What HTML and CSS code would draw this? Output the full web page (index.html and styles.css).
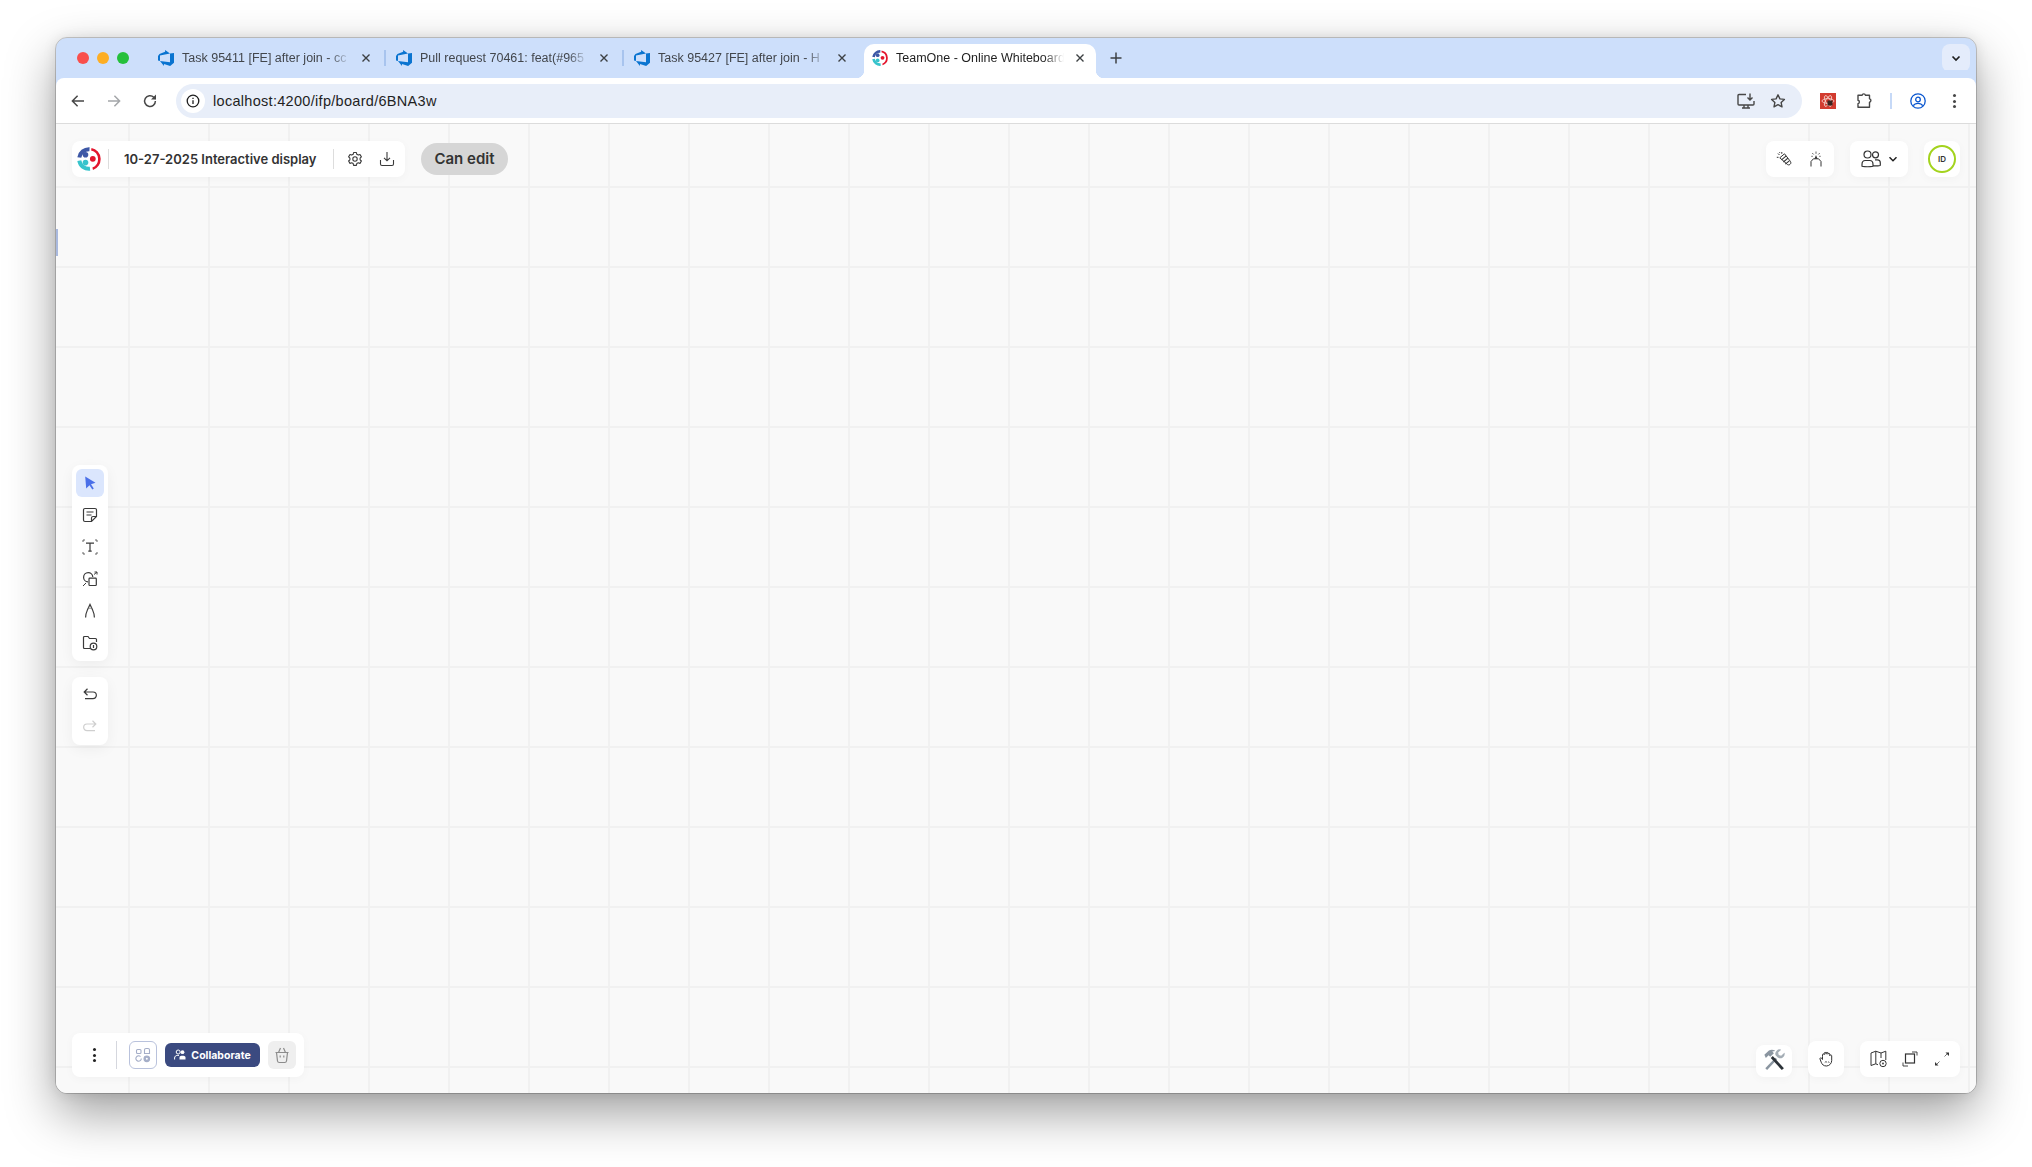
FILE: index.html
```html
<!DOCTYPE html>
<html lang="en">
<head>
<meta charset="utf-8">
<title>TeamOne - Online Whiteboard</title>
<link rel="stylesheet" href="styles.css">
</head>
<body>
<svg class="defs" width="0" height="0" aria-hidden="true">
  <symbol id="ado" viewBox="0 0 24 24"><path fill="#0a74d0" d="M0 8.877L2.247 5.91l8.405-3.416V.022l7.37 5.393L2.966 8.338v8.225L0 15.707zm24-4.45v14.651l-5.753 4.9-9.303-3.057v3.056l-5.978-7.416 15.057 1.798V5.415z"/></symbol>
  <symbol id="logo" viewBox="0 0 24 24">
    <path d="M2.300 10.500A9.800 9.800 0 0 1 12.500 2.200" fill="none" stroke="#3d58a6" stroke-width="4"/>
    <path d="M14.500 .9A11.500 11.500 0 0 1 16 23l-.6-2.400A9 9 0 0 0 14.100 3.500z" fill="#e3152d"/>
    <path d="M2.300 13.600A9.800 9.800 0 0 0 13 21.800" fill="none" stroke="#38c4cc" stroke-width="4"/>
    <circle cx="8.500" cy="7.800" r="2.800" fill="#3d58a6"/>
    <circle cx="8.500" cy="15.600" r="2.800" fill="#38c4cc"/>
    <circle cx="15.800" cy="11.800" r="2.900" fill="#e3152d"/>
  </symbol>
  <symbol id="x" viewBox="0 0 10 10"><path d="M1.500 1.500l7 7M8.500 1.500l-7 7" stroke="#3c4043" stroke-width="1.400" fill="none"/></symbol>
</svg>
<div class="window">
  <header class="tabstrip">
    <div class="lights"><i class="light red"></i><i class="light amber"></i><i class="light green"></i></div>
    <div class="tabs">
      <div class="tab sep"><svg class="favicon"><use href="#ado"/></svg><span class="tabtitle">Task 95411 [FE] after join - cc</span><svg class="close"><use href="#x"/></svg></div>
      <div class="tab sep"><svg class="favicon"><use href="#ado"/></svg><span class="tabtitle">Pull request 70461: feat(#965</span><svg class="close"><use href="#x"/></svg></div>
      <div class="tab"><svg class="favicon"><use href="#ado"/></svg><span class="tabtitle">Task 95427 [FE] after join - H</span><svg class="close"><use href="#x"/></svg></div>
      <div class="tab active"><svg class="favicon"><use href="#logo"/></svg><span class="tabtitle">TeamOne - Online Whiteboard</span><svg class="close"><use href="#x"/></svg></div>
      <div class="newtab">
        <svg width="14" height="14" viewBox="0 0 14 14"><path d="M7 1.500v11M1.500 7h11" stroke="#3c4043" stroke-width="1.500"/></svg>
      </div>
    </div>
    <div class="tabmenu"><svg width="12" height="12" viewBox="0 0 12 12"><path d="M2.500 4.500 6 8l3.500-3.500" fill="none" stroke="#1f1f1f" stroke-width="1.700"/></svg></div>
  </header>

  <nav class="toolbar">
    <div class="navbtns">
      <svg class="navicon" viewBox="0 0 16 16"><path d="M14 8H2.600M7.600 2.800 2.400 8l5.200 5.200" fill="none" stroke="#474747" stroke-width="1.500"/></svg>
      <svg class="navicon" viewBox="0 0 16 16"><path d="M2 8h11.400M8.400 2.800 13.600 8l-5.200 5.200" fill="none" stroke="#a4a6a9" stroke-width="1.500"/></svg>
      <svg class="navicon" viewBox="0 0 16 16"><path d="M13.400 8a5.400 5.400 0 1 1-1.600-3.800L13.600 6" fill="none" stroke="#474747" stroke-width="1.500"/><path d="M14 1.600v5h-5z" fill="#474747"/></svg>
    </div>
    <div class="omnibox">
      <span class="infochip"><svg width="14" height="14" viewBox="0 0 14 14"><circle cx="7" cy="7" r="5.800" fill="none" stroke="#1f1f1f" stroke-width="1.300"/><path d="M7 6.200v3.800M7 3.800v1.200" stroke="#1f1f1f" stroke-width="1.300"/></svg></span>
      <span class="url">localhost:4200/ifp/board/6BNA3w</span>
      <span class="omniright">
        <svg width="18" height="16" viewBox="0 0 18 16"><path d="M9 1.500H2A1 1 0 0 0 1 2.500V11a1 1 0 0 0 1 1h14a1 1 0 0 0 1-1V8M5 15h8M7 12.500v2M11 12.500v2" fill="none" stroke="#474747" stroke-width="1.400"/><path d="M13 .5v6M10.500 4.500 13 7l2.500-2.500" fill="none" stroke="#474747" stroke-width="1.400"/></svg>
        <svg width="16" height="16" viewBox="0 0 16 16"><path d="M8 1.800l1.900 4.100 4.500.5-3.300 3 .9 4.400L8 11.600l-4 2.200.9-4.400-3.300-3 4.500-.5z" fill="none" stroke="#474747" stroke-width="1.400" stroke-linejoin="round"/></svg>
      </span>
    </div>
    <div class="extras">
      <span class="ext-red"><svg width="16" height="16" viewBox="0 0 16 16"><g fill="none" stroke="#f6d5cf" stroke-width=".8"><ellipse cx="8" cy="8" rx="6" ry="2.400"/><ellipse cx="8" cy="8" rx="6" ry="2.400" transform="rotate(60 8 8)"/><ellipse cx="8" cy="8" rx="6" ry="2.400" transform="rotate(120 8 8)"/></g><path d="M7.500 7.500h5v5h-5z" fill="#3a2420"/></svg></span>
      <svg width="16" height="16" viewBox="0 0 16 16"><path d="M1 2.500h4a1.800 1.800 0 0 1 3.500 0H12.500v3.400a1.800 1.800 0 0 1 0 3.500v5H1v-3.400a1.800 1.800 0 0 0 0-3.500z" transform="translate(1 -.2)" fill="none" stroke="#474747" stroke-width="1.400" stroke-linejoin="round"/></svg>
      <i class="extsep"></i>
      <svg width="16" height="16" viewBox="0 0 16 16"><circle cx="8" cy="8" r="7.200" fill="none" stroke="#0b57d0" stroke-width="1.300"/><circle cx="8" cy="6.500" r="2.300" fill="none" stroke="#0b57d0" stroke-width="1.300"/><path d="M3.300 12.800c1-1.800 2.700-2.500 4.700-2.500s3.700.7 4.700 2.500" fill="none" stroke="#0b57d0" stroke-width="1.300"/></svg>
      <span class="kebab"><i></i><i></i><i></i></span>
    </div>
  </nav>

  <main class="board">
    <i class="edge-mark"></i>

    <div class="top-left">
      <div class="panel title-panel">
        <span class="logo-cell"><svg width="24" height="24"><use href="#logo"/></svg></span>
        <span class="board-title">10-27-2025 Interactive display</span>
        <span class="title-actions">
          <svg width="16" height="16" viewBox="0 0 16 16"><path d="M6.600 1.500h2.800l.4 1.800 1.500.8 1.700-.6 1.400 2.400-1.300 1.200v1.700l1.300 1.200-1.400 2.400-1.700-.6-1.500.8-.4 1.800H6.600l-.4-1.800-1.500-.8-1.700.6-1.400-2.400 1.300-1.200V7.100L1.600 5.900 3 3.500l1.700.6 1.500-.8z" fill="none" stroke="#3a3a3a" stroke-width="1.100" stroke-linejoin="round"/><circle cx="8" cy="8" r="2.200" fill="none" stroke="#3a3a3a" stroke-width="1.100"/></svg>
          <svg width="16" height="16" viewBox="0 0 16 16"><path d="M8 1v8.500M5 6.800 8 9.800l3-3M1.500 9v4a1.500 1.500 0 0 0 1.500 1.500h10a1.500 1.500 0 0 0 1.500-1.500V9" fill="none" stroke="#3a3a3a" stroke-width="1.100"/></svg>
        </span>
      </div>
      <div class="can-edit">Can edit</div>
    </div>

    <div class="top-right">
      <div class="panel icon-row">
        <span class="cell"><svg width="16" height="16" viewBox="0 0 16 16"><path d="M3.800 6.800 8.500 2.800l5.900 7.600c.7 1 .6 2.300-.4 3-1 .8-2.300.6-3-.3z" fill="#fff" stroke="#333" stroke-width="1"/><path d="M5.500 8.800l4.700-3.900M7.400 11l4.500-3.800M9.300 13.200l4-3.300" stroke="#333" stroke-width="1.100"/><path d="M3.500 4 2 2.500M2.500 6.300H.8M5.800 2.800V1M3.500 1.200l.4.8" stroke="#333" stroke-width="1" fill="none"/></svg></span>
        <span class="cell"><svg width="16" height="16" viewBox="0 0 16 16"><path d="M3 15.500V10.500l2.400-2.700h5.200l2.400 2.700v5" fill="none" stroke="#333" stroke-width="1"/><path d="M8 .5v2.300M4.200 2l1.500 1.500M11.800 2l-1.500 1.500M3.300 5.300h1.500M11.200 5.300h1.500" stroke="#555" stroke-width=".9"/><path d="M6.500 7.800 8 4l1.500 3.800z" fill="#333"/></svg></span>
      </div>
      <div class="panel users-panel">
        <svg width="20" height="18" viewBox="0 0 20 18"><circle cx="6.500" cy="4.500" r="3.500" fill="none" stroke="#333" stroke-width="1.200"/><circle cx="14.500" cy="4.800" r="3" fill="none" stroke="#333" stroke-width="1.200"/><path d="M1 16.500v-2c0-2.500 1.500-4 3.200-4h4.600c1.800 0 3.200 1.500 3.200 4v2c0 .3-11 .3-11 0zM14 9.800h2.500c1.500 0 2.800 1.100 2.800 3v2.800c0 .2-4 .3-6.800.2" fill="none" stroke="#333" stroke-width="1.200" stroke-linejoin="round"/></svg>
        <svg width="10" height="10" viewBox="0 0 10 10"><path d="M1.500 3.300 5 6.800l3.500-3.500" fill="none" stroke="#222" stroke-width="1.500"/></svg>
      </div>
      <div class="panel avatar-panel"><span class="avatar">ID</span></div>
    </div>

    <aside class="left-tools">
      <div class="panel tool-col">
        <span class="tool selected"><svg width="16" height="16" viewBox="0 0 16 16"><path d="M3.200 1.600 13.500 7.800 9 9.300l2.800 4.200-1.500 1-2.800-4.300-3.300 3.400z" fill="#4a6fe8"/></svg></span>
        <span class="tool"><svg width="16" height="16" viewBox="0 0 16 16"><path d="M9.500 14.500H3a1.500 1.500 0 0 1-1.500-1.500V3A1.500 1.500 0 0 1 3 1.500h10A1.500 1.500 0 0 1 14.500 3v6.500zM14.500 9.500h-3.500a1.500 1.500 0 0 0-1.500 1.500v3.500M4.500 5h7M4.500 8h5" fill="none" stroke="#3a3a3a" stroke-width="1.200"/></svg></span>
        <span class="tool"><svg width="16" height="16" viewBox="0 0 16 16"><path d="M4 4.200h8M8 4.200v8M6.300 12.200h3.400" fill="none" stroke="#3a3a3a" stroke-width="1.200"/><path d="M1 3V1h2M13 1h2v2M15 13v2h-2M3 15H1v-2" fill="none" stroke="#555" stroke-width=".9"/></svg></span>
        <span class="tool"><svg width="16" height="16" viewBox="0 0 16 16"><path d="M6 10.800A4.600 4.600 0 1 1 10.800 6" fill="none" stroke="#3a3a3a" stroke-width="1.200"/><rect x="7" y="7.200" width="7.300" height="7.300" rx=".8" fill="none" stroke="#3a3a3a" stroke-width="1.200"/><path d="M1 15l3-3M12 3.500l2.800-2.300M12.500 1h2.500v2.500" fill="none" stroke="#3a3a3a" stroke-width="1"/></svg></span>
        <span class="tool"><svg width="16" height="16" viewBox="0 0 16 16"><path d="M3.600 14.500c-.2-3.200.9-5.500 2-8L8 1.500l2.400 5c1.100 2.500 2.200 4.800 2 8" fill="none" stroke="#3a3a3a" stroke-width="1.200"/><path d="M6.200 4.900c1.100.6 2.500.6 3.600 0" fill="none" stroke="#777" stroke-width=".8"/></svg></span>
        <span class="tool"><svg width="16" height="16" viewBox="0 0 16 16"><path d="M8 13.500H2.500a1 1 0 0 1-1-1V2.500a1 1 0 0 1 1-1h3.500l1.500 2h6a1 1 0 0 1 1 1V7" fill="none" stroke="#3a3a3a" stroke-width="1.200"/><circle cx="11.500" cy="11.500" r="3.300" fill="#fff" stroke="#3a3a3a" stroke-width="1.200"/><path d="M11.500 10v3" stroke="#3a3a3a" stroke-width="1.200"/></svg></span>
      </div>
      <div class="panel tool-col">
        <span class="tool"><svg width="16" height="16" viewBox="0 0 16 16"><path d="M5.500 1.800 2.200 5l3.300 3.200M2.500 5H11a3.300 3.300 0 0 1 0 6.700H3" fill="none" stroke="#3a3a3a" stroke-width="1.200"/></svg></span>
        <span class="tool"><svg width="16" height="16" viewBox="0 0 16 16"><path d="M10.500 1.800 13.800 5l-3.300 3.200M13.500 5H5a3.300 3.300 0 0 0 0 6.700h8" fill="none" stroke="#cfcfcf" stroke-width="1.200"/></svg></span>
      </div>
    </aside>

    <div class="panel bottom-left">
      <span class="kebab dark"><i></i><i></i><i></i></span>
      <i class="vrule"></i>
      <span class="outline-btn"><svg width="16" height="16" viewBox="0 0 16 16"><g fill="none" stroke="#a5aec8" stroke-width="1.100"><rect x="1.500" y="2.500" width="4.500" height="4" rx="1"/><path d="M9.500 6.500V3a1.500 1.500 0 0 1 1.500-1.500h2A1.500 1.500 0 0 1 14.500 3v3.500z"/><path d="M6.300 11.500a2.700 2.700 0 1 1-.8-1.900"/><circle cx="11.800" cy="11.800" r="2.800" fill="#a5aec8"/></g><circle cx="11.800" cy="11.800" r="1" fill="#fff"/></svg></span>
      <span class="collab">
        <svg width="12" height="12" viewBox="0 0 12 12"><circle cx="4.200" cy="3" r="2" fill="none" stroke="#fff"/><path d="M.6 10.500V9c0-1.500 1.200-2.600 2.600-2.600H5" fill="none" stroke="#fff"/><circle cx="8.500" cy="3.200" r="1.900" fill="#fff"/><path d="M5.500 10.500V8.500c0-1.100.9-1.800 2-1.800h2c1.100 0 2 .7 2 1.800v2z" fill="#fff"/></svg>
        Collaborate
      </span>
      <span class="trash-btn"><svg width="18" height="18" viewBox="0 0 18 18"><path d="M2.500 6.500h13M3.500 6.500l1 8.500a1.800 1.800 0 0 0 1.800 1.500h5.400a1.800 1.800 0 0 0 1.800-1.500l1-8.500M5.500 6.500 7.500 2M12.500 6.500 10.500 2M7.200 9.500v2M10.800 9.500v2" fill="none" stroke="#8c8c8c" stroke-width="1.200"/></svg></span>
    </div>

    <div class="bottom-right">
      <span class="panel tools-emoji"><svg width="22" height="22" viewBox="0 0 24 24">
        <path d="M2.500 21 13.500 9.500l1.900 1.700L4.500 23z" fill="#8a95a0"/>
        <path d="M20.500 23 8.500 9.700l2.200-2L22.800 21z" fill="#2c3238"/>
        <path d="M1.500 6.300 6.500 1.500c2.200-1.200 5-1 6.300.2l.6.6-3.300.5 1.800 1.700-4 4-1.800-1.600-3 3z" fill="#8a95a0"/>
        <path d="M23.300 4 19.800 7.300l-2.600-.7-.7-2.700 3.400-3.200a4.900 4.900 0 0 0-6.200 6.200l2.400 2.400a4.900 4.900 0 0 0 7.400-5.300z" fill="#a4adb5"/>
      </svg></span>
      <span class="panel hand-panel"><svg width="16" height="16" viewBox="0 0 16 16"><path d="M3.500 5.500V3.800a.9.9 0 0 1 1.800 0M5.300 3.500V2.300a.9.900 0 0 1 1.800 0v1M7.100 3V2.200a.9.900 0 0 1 1.800 0V3.200M8.900 3.200a.9.900 0 0 1 1.800 0v1.500c.1-1.100 2-1.100 2 .2V9.500A5.500 5.500 0 0 1 7.500 15c-3 0-4.300-1.400-5.300-3.800L1 8c-.3-1.100 1-1.700 1.600-.8l.9 1.300V5.500" transform="translate(1 0)" fill="none" stroke="#333" stroke-width="1"/><path d="M6.800 11.400c.8-.8 1.600-.8 2.200 0M9.900 11.400c.5-.5 1-.5 1.500 0" fill="none" stroke="#333" stroke-width=".9"/></svg></span>
      <span class="panel icon-row wide">
        <span class="cell"><svg width="18" height="18" viewBox="0 0 18 18"><path d="M2 3 6.800 1.200 12 3l4.800-1.800V10M9 14.800 6.800 13.800 2 15.500V3M6.800 1.200v12.600M12 3v5" fill="none" stroke="#333" stroke-width="1"/><circle cx="14" cy="13.500" r="3.200" fill="#fff" stroke="#333"/><circle cx="14" cy="13.500" r=".9" fill="#333"/></svg></span>
        <span class="cell"><svg width="16" height="16" viewBox="0 0 16 16"><rect x="3.500" y="3" width="9" height="9" fill="none" stroke="#333" stroke-width="1.200"/><path d="M10 1h5v3.500M1 11.500V15h5" fill="none" stroke="#333" stroke-width=".9"/></svg></span>
        <span class="cell"><svg width="16" height="16" viewBox="0 0 16 16"><path d="M10.500 5.500l3-3M5.500 10.500l-3 3" fill="none" stroke="#666" stroke-width=".9"/><path d="M11.500 1.500h3.500V5zM4.500 14.500H1V11z" fill="#333"/></svg></span>
      </span>
    </div>
  </main>
</div>
</body>
</html>
```

FILE: styles.css
```css
* { box-sizing: border-box; }
html, body { margin: 0; height: 100%; overflow: hidden; background: #fff; }
body { padding: 38px 56px 0; font-family: "Liberation Sans", Arial, sans-serif; }
.defs { position: absolute; }
i { display: block; }

.window {
  height: 1055px;
  display: flex;
  flex-direction: column;
  border-radius: 11px;
  overflow: hidden;
  outline: 1px solid rgba(0, 0, 0, .18);
  box-shadow: 0 20px 50px rgba(0, 0, 0, .38), 0 0 14px rgba(0, 0, 0, .1);
  background: #f9f9f9;
}

/* browser tab strip */
.tabstrip {
  height: 40px;
  flex: none;
  display: flex;
  align-items: flex-start;
  background: #cddffb;
}
.lights { width: 94px; height: 40px; padding-left: 21px; display: flex; align-items: center; gap: 8px; }
.light { width: 12px; height: 12px; border-radius: 50%; }
.light.red { background: #f94f4c; }
.light.amber { background: #fdae24; }
.light.green { background: #25c03b; }

.tabs { display: flex; gap: 6px; padding-top: 6px; flex: 1; }
.tab {
  position: relative;
  width: 232px;
  height: 34px;
  padding: 0 8px 6px 8px;
  display: flex;
  align-items: center;
  font-size: 12.500px;
  color: #42464c;
}
.tab.sep::after {
  content: "";
  position: absolute;
  right: -4px;
  top: 6px;
  width: 2px;
  height: 16px;
  background: #a8c4ee;
}
.tab.active {
  background: #fff;
  border-radius: 10px 10px 0 0;
  color: #1f1f1f;
  z-index: 1;
}
.tab.active::before, .tab.active::after {
  content: "";
  position: absolute;
  bottom: 0;
  width: 8px;
  height: 8px;
}
.tab.active::before { left: -8px; background: radial-gradient(circle at 0 0, transparent 8px, #fff 8.5px); }
.tab.active::after { right: -8px; background: radial-gradient(circle at 100% 0, transparent 8px, #fff 8.5px); }
.favicon { width: 16px; height: 16px; flex: none; }
.tabtitle {
  flex: 1;
  min-width: 0;
  margin-left: 8px;
  padding-bottom: 1px;
  white-space: nowrap;
  overflow: hidden;
  -webkit-mask-image: linear-gradient(to right, #000 88%, transparent 100%);
  mask-image: linear-gradient(to right, #000 88%, transparent 100%);
}
.close { width: 10px; height: 10px; flex: none; margin: 0 3px 0 11px; }
.newtab { width: 28px; height: 28px; display: flex; align-items: center; justify-content: center; }
.tabmenu {
  width: 28px;
  height: 28px;
  margin: 6px 6px 0 0;
  border-radius: 8px;
  background: #e4ecfb;
  display: flex;
  align-items: center;
  justify-content: center;
}

/* browser toolbar */
.toolbar {
  height: 46px;
  flex: none;
  display: flex;
  align-items: flex-start;
  background: #fff;
  border-bottom: 1px solid #dcdcdc;
  border-radius: 8px 8px 0 0;
  box-shadow: 0 -8px 0 #cddffb;
  padding-top: 6px;
}
.navbtns { width: 120px; height: 34px; padding-left: 14px; display: flex; align-items: center; gap: 20px; }
.navicon { width: 16px; height: 16px; }
.omnibox {
  width: 1626px;
  height: 34px;
  border-radius: 17px;
  background: #e8eef9;
  display: flex;
  align-items: center;
  padding: 0 16px 0 5px;
}
.infochip { width: 24px; height: 24px; border-radius: 50%; background: #fff; display: flex; align-items: center; justify-content: center; flex: none; }
.url { margin-left: 8px; font-size: 14.500px; letter-spacing: .3px; color: #1f1f1f; flex: 1; }
.omniright { display: flex; align-items: center; gap: 15px; }
.extras { flex: 1; height: 34px; padding-left: 18px; display: flex; align-items: center; gap: 20px; }
.ext-red { width: 16px; height: 16px; background: #d23b2f; display: block; flex: none; }
.ext-red svg { display: block; }
.extsep { width: 2px; height: 16px; background: #c6d9f7; margin: 0 -2px; }
.kebab { display: flex; flex-direction: column; gap: 2.500px; align-items: center; width: 16px; }
.kebab i { width: 3px; height: 3px; border-radius: 50%; background: #474747; }
.kebab.dark i { background: #222; }

/* board canvas */
.board {
  flex: 1;
  position: relative;
  background-color: #f9f9f9;
  background-image:
    linear-gradient(to right, #f1f1f1 2px, transparent 2px),
    linear-gradient(to bottom, #f1f1f1 2px, transparent 2px);
  background-size: 80px 80px;
  background-position: 72px 62px;
  font-family: Inter, "Liberation Sans", sans-serif;
  color: #333;
}
.edge-mark { position: absolute; left: 0; top: 105px; width: 2px; height: 27px; background: #a9b9de; }
.panel {
  background: #fff;
  border-radius: 8px;
  box-shadow: 0 2px 10px rgba(0, 0, 0, .03);
}
.top-left { position: absolute; left: 16px; top: 17px; display: flex; align-items: center; gap: 16px; }
.title-panel { height: 36px; width: 333px; display: flex; align-items: center; }
.logo-cell {
  width: 37px;
  height: 20px;
  padding-left: 5px;
  border-right: 1px solid #ddd;
  display: flex;
  align-items: center;
}
.logo-cell svg { flex: none; }
.board-title { margin-left: 15px; width: 209px; font-size: 13px; font-weight: 600; white-space: nowrap; }
.title-actions {
  height: 20px;
  border-left: 1px solid #ddd;
  padding-left: 13px;
  display: flex;
  align-items: center;
  gap: 16px;
}
.title-actions svg { flex: none; }
.can-edit {
  height: 32px;
  width: 87px;
  padding-bottom: 2px;
  border-radius: 16px;
  background: #d6d6d6;
  font-size: 15px;
  font-weight: 600;
  display: flex;
  align-items: center;
  justify-content: center;
}
.top-right { position: absolute; right: 16px; top: 17px; display: flex; gap: 16px; }
.icon-row { height: 36px; display: flex; align-items: center; padding: 0 2px; }
.cell { width: 32px; height: 32px; display: flex; align-items: center; justify-content: center; }
.users-panel { width: 58px; height: 36px; padding-left: 1px; display: flex; align-items: center; justify-content: center; gap: 7px; }
.avatar-panel { width: 36px; height: 36px; display: flex; align-items: center; justify-content: center; }
.avatar {
  width: 28px;
  height: 28px;
  border-radius: 50%;
  border: 2px solid #a3d31d;
  font-size: 8px;
  font-weight: 600;
  display: flex;
  align-items: center;
  justify-content: center;
}

.left-tools { position: absolute; left: 16px; top: 341px; display: flex; flex-direction: column; gap: 16px; }
.tool-col { width: 36px; padding: 4px; display: flex; flex-direction: column; gap: 4px; box-shadow: 0 4px 14px rgba(0, 0, 0, .05); }
.tool { width: 28px; height: 28px; border-radius: 6px; display: flex; align-items: center; justify-content: center; }
.tool.selected { background: #dbe6fd; }

.bottom-left {
  position: absolute;
  left: 16px;
  bottom: 16px;
  width: 232px;
  height: 44px;
  display: flex;
  align-items: center;
  padding-left: 14px;
}
.vrule { width: 1px; height: 28px; background: #d5d7de; margin-left: 14px; }
.outline-btn {
  width: 28px;
  height: 28px;
  margin-left: 12px;
  border: 1px solid #b9c2dc;
  border-radius: 6px;
  display: flex;
  align-items: center;
  justify-content: center;
}
.collab {
  width: 95px;
  height: 24px;
  margin-left: 8px;
  border-radius: 6px;
  background: #3b4a80;
  color: #fff;
  font-size: 10.500px;
  font-weight: 700;
  display: flex;
  align-items: center;
  justify-content: center;
  gap: 5px;
}
.trash-btn {
  width: 28px;
  height: 28px;
  margin-left: 8px;
  border-radius: 6px;
  background: #efefef;
  display: flex;
  align-items: center;
  justify-content: center;
}
.bottom-right { position: absolute; right: 16px; bottom: 16px; display: flex; align-items: flex-end; gap: 16px; }
.tools-emoji { width: 36px; height: 32px; padding-bottom: 2px; display: flex; align-items: center; justify-content: center; }
.hand-panel { width: 36px; height: 36px; display: flex; align-items: center; justify-content: center; }
```
